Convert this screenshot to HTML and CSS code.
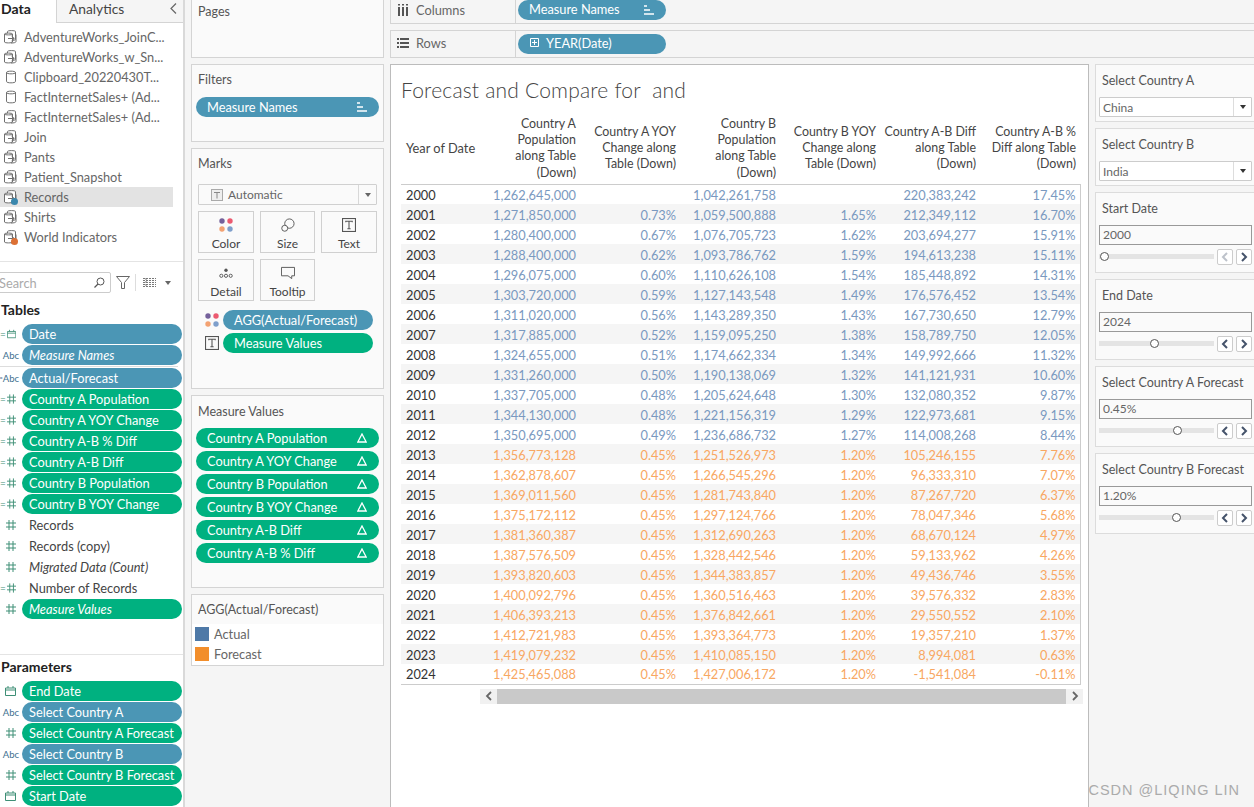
FILE: index.html
```html
<!DOCTYPE html>
<html lang="en">
<head>
<meta charset="utf-8">
<title>Forecast and Compare</title>
<link rel="stylesheet" href="styles.css">
</head>
<body>
<svg class="defs" width="0" height="0" aria-hidden="true">
  <symbol id="ds" viewBox="0 0 16 16"><g fill="#fff" stroke="#707070" stroke-width="1"><path d="M4.500 2.500c0-1.200 8-1.200 8 0v8c0 1.200-8 1.200-8 0z"/><path d="M1.500 5c0-1.200 8-1.200 8 0v8c0 1.200-8 1.200-8 0z"/><path d="M1.500 5c0 1.200 8 1.200 8 0" fill="none"/></g><path d="M5 9.500h6M8.500 7l2.800 2.500L8.500 12" fill="none" stroke="#707070"/><path d="M13 5.500v7c0 1-2 1.500-5 1.500" fill="none" stroke="#707070"/></symbol>
  <symbol id="cyl" viewBox="0 0 16 16"><g fill="none" stroke="#707070"><path d="M3.500 3.500c0-1.800 9-1.800 9 0v9c0 1.800-9 1.800-9 0z"/><path d="M3.500 3.500c0 1.800 9 1.800 9 0"/></g></symbol>
  <symbol id="hash" viewBox="0 0 10 10"><path d="M3 0v10M7 0v10M0 3h10M0 7h10" stroke="#3e8f76" stroke-width="1" fill="none"/></symbol>
  <symbol id="cal" viewBox="0 0 11 10"><path d="M.5 2h10v7.500H.5zM.5 4h10M3 0v2M8 0v2" stroke="#3e8f76" fill="none"/></symbol>
  <symbol id="tbox" viewBox="0 0 13 13"><rect x=".5" y=".5" width="12" height="12" fill="none" stroke="#555"/><path d="M3.500 4V3h6v1M6.500 3v7M5 10h3" fill="none" stroke="#555"/></symbol>
  <symbol id="dots" viewBox="0 0 14 14"><circle cx="3" cy="3" r="2.700" fill="#75619b"/><circle cx="11" cy="3" r="2.700" fill="#ec5a70"/><circle cx="3" cy="11" r="2.700" fill="#f3a272"/><circle cx="11" cy="11" r="2.700" fill="#7e9fcb"/></symbol>
  <symbol id="sort" viewBox="0 0 10 10"><path d="M0 1h3M0 5h6M0 9h10" stroke="#fff" stroke-width="1.500" fill="none"/></symbol>
  <symbol id="delta" viewBox="0 0 10 10"><path d="M5 1L9.200 9H.8z" fill="none" stroke="#fff" stroke-width="1.300"/></symbol>
  <symbol id="prev" viewBox="0 0 8 10"><path d="M6 1L2 5l4 4" fill="none" stroke="#45536b" stroke-width="2"/></symbol>
  <symbol id="next" viewBox="0 0 8 10"><path d="M2 1l4 4-4 4" fill="none" stroke="#45536b" stroke-width="2"/></symbol>
  <symbol id="prev-g" viewBox="0 0 8 10"><path d="M6 1L2 5l4 4" fill="none" stroke="#666" stroke-width="1.800"/></symbol>
  <symbol id="next-g" viewBox="0 0 8 10"><path d="M2 1l4 4-4 4" fill="none" stroke="#666" stroke-width="1.800"/></symbol>
</svg>

<div class="app">
  <aside class="data-pane">
    <div class="tabs">
      <div class="tab tab-active">Data</div>
      <div class="tab tab-other">Analytics<svg class="collapse" viewBox="0 0 7 11"><path d="M6 .5L1 5.500l5 5" fill="none" stroke="#666" stroke-width="1.200"/></svg></div>
    </div>
    <ul class="sources">
      <li class="source"><svg class="source-icon"><use href="#ds"/></svg>AdventureWorks_JoinC...</li>
      <li class="source"><svg class="source-icon"><use href="#ds"/></svg>AdventureWorks_w_Sn...</li>
      <li class="source"><svg class="source-icon"><use href="#cyl"/></svg>Clipboard_20220430T...</li>
      <li class="source"><svg class="source-icon"><use href="#cyl"/></svg>FactInternetSales+ (Ad...</li>
      <li class="source"><svg class="source-icon"><use href="#ds"/></svg>FactInternetSales+ (Ad...</li>
      <li class="source"><svg class="source-icon"><use href="#ds"/></svg>Join</li>
      <li class="source"><svg class="source-icon"><use href="#ds"/></svg>Pants</li>
      <li class="source"><svg class="source-icon"><use href="#ds"/></svg>Patient_Snapshot</li>
      <li class="source source-active"><svg class="source-icon"><use href="#ds"/></svg>Records<i class="badge badge-blue"></i></li>
      <li class="source"><svg class="source-icon"><use href="#ds"/></svg>Shirts</li>
      <li class="source"><svg class="source-icon"><use href="#ds"/></svg>World Indicators<i class="badge badge-orange"></i></li>
    </ul>
    <div class="search-row">
      <div class="search">
        <span class="search-text">Search</span>
        <svg class="search-icon" viewBox="0 0 12 12"><circle cx="7.500" cy="4.500" r="3.500" fill="none" stroke="#555"/><path d="M5 7L1.500 10.500" stroke="#555" stroke-width="1.300"/></svg>
      </div>
      <svg class="filter-icon" viewBox="0 0 14 13"><path d="M.5.500h13L8.500 6.500v6h-3v-6z" fill="none" stroke="#666"/></svg>
      <span class="vsep"></span>
      <svg class="list-icon" viewBox="0 0 13 9"><path d="M0 .5h13M0 2.500h13M0 4.500h13M0 6.500h13M0 8.500h13M3 0v9" stroke="#777" fill="none" stroke-dasharray="2 1"/></svg>
      <span class="caret"></span>
    </div>
    <section class="fields">
      <h3 class="fields-title">Tables</h3>
      <div class="field"><span class="ftype"><span class="eq">=</span><svg class="ico-cal"><use href="#cal"/></svg></span><span class="pill pill-blue">Date</span></div>
      <div class="field"><span class="ftype abc">Abc</span><span class="pill pill-blue em">Measure Names</span></div>
      <div class="field-sep"></div>
      <div class="field"><span class="ftype abc"><span class="eq">=</span>Abc</span><span class="pill pill-blue">Actual/Forecast</span></div>
      <div class="field"><span class="ftype"><span class="eq">=</span><svg class="ico-hash"><use href="#hash"/></svg></span><span class="pill pill-green">Country A Population</span></div>
      <div class="field"><span class="ftype"><span class="eq">=</span><svg class="ico-hash"><use href="#hash"/></svg></span><span class="pill pill-green">Country A YOY Change</span></div>
      <div class="field"><span class="ftype"><span class="eq">=</span><svg class="ico-hash"><use href="#hash"/></svg></span><span class="pill pill-green">Country A-B % Diff</span></div>
      <div class="field"><span class="ftype"><span class="eq">=</span><svg class="ico-hash"><use href="#hash"/></svg></span><span class="pill pill-green">Country A-B Diff</span></div>
      <div class="field"><span class="ftype"><span class="eq">=</span><svg class="ico-hash"><use href="#hash"/></svg></span><span class="pill pill-green">Country B Population</span></div>
      <div class="field"><span class="ftype"><span class="eq">=</span><svg class="ico-hash"><use href="#hash"/></svg></span><span class="pill pill-green">Country B YOY Change</span></div>
      <div class="field"><span class="ftype"><svg class="ico-hash"><use href="#hash"/></svg></span><span class="plain">Records</span></div>
      <div class="field"><span class="ftype"><svg class="ico-hash"><use href="#hash"/></svg></span><span class="plain">Records (copy)</span></div>
      <div class="field"><span class="ftype"><svg class="ico-hash"><use href="#hash"/></svg></span><span class="plain em">Migrated Data (Count)</span></div>
      <div class="field"><span class="ftype"><span class="eq">=</span><svg class="ico-hash"><use href="#hash"/></svg></span><span class="plain">Number of Records</span></div>
      <div class="field"><span class="ftype"><svg class="ico-hash"><use href="#hash"/></svg></span><span class="pill pill-green em">Measure Values</span></div>
    </section>
    <section class="params">
      <h3 class="fields-title">Parameters</h3>
      <div class="field"><span class="ftype"><svg class="ico-cal"><use href="#cal"/></svg></span><span class="pill pill-green">End Date</span></div>
      <div class="field"><span class="ftype abc">Abc</span><span class="pill pill-blue">Select Country A</span></div>
      <div class="field"><span class="ftype"><svg class="ico-hash"><use href="#hash"/></svg></span><span class="pill pill-green">Select Country A Forecast</span></div>
      <div class="field"><span class="ftype abc">Abc</span><span class="pill pill-blue">Select Country B</span></div>
      <div class="field"><span class="ftype"><svg class="ico-hash"><use href="#hash"/></svg></span><span class="pill pill-green">Select Country B Forecast</span></div>
      <div class="field"><span class="ftype"><svg class="ico-cal"><use href="#cal"/></svg></span><span class="pill pill-green">Start Date</span></div>
    </section>
  </aside>

  <div class="cards">
    <section class="card card-pages"><h4 class="card-title">Pages</h4></section>
    <section class="card card-filters">
      <h4 class="card-title">Filters</h4>
      <div class="pill pill-blue pill-wide">Measure Names<svg class="pill-sort"><use href="#sort"/></svg></div>
    </section>
    <section class="card card-marks">
      <h4 class="card-title">Marks</h4>
      <div class="mark-select">
        <svg class="mark-t" viewBox="0 0 12 12"><rect x=".5" y=".5" width="11" height="11" fill="#eee" stroke="#aaa"/><path d="M3 3.500h6M6 3.500v6" stroke="#888" fill="none"/></svg>
        <span class="mark-label">Automatic</span>
        <span class="mark-arrow"><span class="caret"></span></span>
      </div>
      <div class="mark-grid">
        <div class="mark-btn"><svg class="mark-ico"><use href="#dots"/></svg>Color</div>
        <div class="mark-btn"><svg class="mark-ico" viewBox="0 0 15 15"><circle cx="9" cy="6" r="5" fill="none" stroke="#555"/><circle cx="4" cy="11" r="3.200" fill="#fafafa" stroke="#555"/></svg>Size</div>
        <div class="mark-btn"><svg class="mark-ico"><use href="#tbox"/></svg>Text</div>
        <div class="mark-btn"><svg class="mark-ico" viewBox="0 0 15 15"><circle cx="7.500" cy="4.500" r="1.800" fill="#555"/><circle cx="2.500" cy="10.500" r="1.700" fill="none" stroke="#555"/><circle cx="7.500" cy="10.500" r="1.700" fill="none" stroke="#555"/><circle cx="12.500" cy="10.500" r="1.700" fill="none" stroke="#555"/></svg>Detail</div>
        <div class="mark-btn"><svg class="mark-ico" viewBox="0 0 15 15"><path d="M.5 1.500h14v9h-3v3l-4-3H.5z" fill="none" stroke="#555"/></svg>Tooltip</div>
      </div>
      <div class="mark-field"><svg class="mf-ico"><use href="#dots"/></svg><span class="pill pill-blue mf-pill">AGG(Actual/Forecast)</span></div>
      <div class="mark-field"><svg class="mf-ico"><use href="#tbox"/></svg><span class="pill pill-green mf-pill">Measure Values</span></div>
    </section>
    <section class="card card-values">
      <h4 class="card-title">Measure Values</h4>
      <div class="value-list">
        <div class="pill pill-green pill-wide">Country A Population<svg class="pill-delta"><use href="#delta"/></svg></div>
        <div class="pill pill-green pill-wide">Country A YOY Change<svg class="pill-delta"><use href="#delta"/></svg></div>
        <div class="pill pill-green pill-wide">Country B Population<svg class="pill-delta"><use href="#delta"/></svg></div>
        <div class="pill pill-green pill-wide">Country B YOY Change<svg class="pill-delta"><use href="#delta"/></svg></div>
        <div class="pill pill-green pill-wide">Country A-B Diff<svg class="pill-delta"><use href="#delta"/></svg></div>
        <div class="pill pill-green pill-wide">Country A-B % Diff<svg class="pill-delta"><use href="#delta"/></svg></div>
      </div>
    </section>
    <section class="card card-legend">
      <h4 class="card-title">AGG(Actual/Forecast)</h4>
      <div class="legend-body">
        <div class="legend-row"><span class="swatch swatch-actual"></span>Actual</div>
        <div class="legend-row"><span class="swatch swatch-forecast"></span>Forecast</div>
      </div>
    </section>
  </div>

  <main class="workspace">
    <div class="shelf shelf-columns">
      <div class="shelf-label"><svg class="shelf-ico" viewBox="0 0 11 12"><path d="M1.500 3v9M5.500 3v9M9.500 3v9" stroke="#555" stroke-width="2" fill="none"/><path d="M1.500 0v1.500M5.500 0v1.500M9.500 0v1.500" stroke="#555" stroke-width="2" fill="none"/></svg>Columns</div>
      <div class="pill pill-blue shelf-pill">Measure Names<svg class="pill-sort"><use href="#sort"/></svg></div>
    </div>
    <div class="shelf shelf-rows">
      <div class="shelf-label"><svg class="shelf-ico" viewBox="0 0 12 10"><path d="M3 1h9M3 5h9M3 9h9M0 1h2M0 5h2M0 9h2" stroke="#555" stroke-width="1.800" fill="none"/></svg>Rows</div>
      <div class="pill pill-blue shelf-pill"><svg class="plus" viewBox="0 0 9 9"><path d="M.5.500h8v8h-8zM4.500 2v5M2 4.500h5" fill="none" stroke="#fff"/></svg>YEAR(Date)</div>
    </div>
    <div class="canvas">
      <section class="view">
        <h1 class="view-title">Forecast and Compare for&nbsp; and</h1>
        <table class="crosstab">
          <thead>
            <tr>
              <th class="year">Year of Date</th>
              <th>Country A<br>Population<br>along Table<br>(Down)</th>
              <th>Country A YOY<br>Change along<br>Table (Down)</th>
              <th>Country B<br>Population<br>along Table<br>(Down)</th>
              <th>Country B YOY<br>Change along<br>Table (Down)</th>
              <th>Country A-B Diff<br>along Table<br>(Down)</th>
              <th>Country A-B %<br>Diff along Table<br>(Down)</th>
            </tr>
          </thead>
          <tbody>
            <tr class="actual"><td>2000</td><td>1,262,645,000</td><td></td><td>1,042,261,758</td><td></td><td>220,383,242</td><td>17.45%</td></tr>
            <tr class="actual"><td>2001</td><td>1,271,850,000</td><td>0.73%</td><td>1,059,500,888</td><td>1.65%</td><td>212,349,112</td><td>16.70%</td></tr>
            <tr class="actual"><td>2002</td><td>1,280,400,000</td><td>0.67%</td><td>1,076,705,723</td><td>1.62%</td><td>203,694,277</td><td>15.91%</td></tr>
            <tr class="actual"><td>2003</td><td>1,288,400,000</td><td>0.62%</td><td>1,093,786,762</td><td>1.59%</td><td>194,613,238</td><td>15.11%</td></tr>
            <tr class="actual"><td>2004</td><td>1,296,075,000</td><td>0.60%</td><td>1,110,626,108</td><td>1.54%</td><td>185,448,892</td><td>14.31%</td></tr>
            <tr class="actual"><td>2005</td><td>1,303,720,000</td><td>0.59%</td><td>1,127,143,548</td><td>1.49%</td><td>176,576,452</td><td>13.54%</td></tr>
            <tr class="actual"><td>2006</td><td>1,311,020,000</td><td>0.56%</td><td>1,143,289,350</td><td>1.43%</td><td>167,730,650</td><td>12.79%</td></tr>
            <tr class="actual"><td>2007</td><td>1,317,885,000</td><td>0.52%</td><td>1,159,095,250</td><td>1.38%</td><td>158,789,750</td><td>12.05%</td></tr>
            <tr class="actual"><td>2008</td><td>1,324,655,000</td><td>0.51%</td><td>1,174,662,334</td><td>1.34%</td><td>149,992,666</td><td>11.32%</td></tr>
            <tr class="actual"><td>2009</td><td>1,331,260,000</td><td>0.50%</td><td>1,190,138,069</td><td>1.32%</td><td>141,121,931</td><td>10.60%</td></tr>
            <tr class="actual"><td>2010</td><td>1,337,705,000</td><td>0.48%</td><td>1,205,624,648</td><td>1.30%</td><td>132,080,352</td><td>9.87%</td></tr>
            <tr class="actual"><td>2011</td><td>1,344,130,000</td><td>0.48%</td><td>1,221,156,319</td><td>1.29%</td><td>122,973,681</td><td>9.15%</td></tr>
            <tr class="actual"><td>2012</td><td>1,350,695,000</td><td>0.49%</td><td>1,236,686,732</td><td>1.27%</td><td>114,008,268</td><td>8.44%</td></tr>
            <tr class="forecast"><td>2013</td><td>1,356,773,128</td><td>0.45%</td><td>1,251,526,973</td><td>1.20%</td><td>105,246,155</td><td>7.76%</td></tr>
            <tr class="forecast"><td>2014</td><td>1,362,878,607</td><td>0.45%</td><td>1,266,545,296</td><td>1.20%</td><td>96,333,310</td><td>7.07%</td></tr>
            <tr class="forecast"><td>2015</td><td>1,369,011,560</td><td>0.45%</td><td>1,281,743,840</td><td>1.20%</td><td>87,267,720</td><td>6.37%</td></tr>
            <tr class="forecast"><td>2016</td><td>1,375,172,112</td><td>0.45%</td><td>1,297,124,766</td><td>1.20%</td><td>78,047,346</td><td>5.68%</td></tr>
            <tr class="forecast"><td>2017</td><td>1,381,360,387</td><td>0.45%</td><td>1,312,690,263</td><td>1.20%</td><td>68,670,124</td><td>4.97%</td></tr>
            <tr class="forecast"><td>2018</td><td>1,387,576,509</td><td>0.45%</td><td>1,328,442,546</td><td>1.20%</td><td>59,133,962</td><td>4.26%</td></tr>
            <tr class="forecast"><td>2019</td><td>1,393,820,603</td><td>0.45%</td><td>1,344,383,857</td><td>1.20%</td><td>49,436,746</td><td>3.55%</td></tr>
            <tr class="forecast"><td>2020</td><td>1,400,092,796</td><td>0.45%</td><td>1,360,516,463</td><td>1.20%</td><td>39,576,332</td><td>2.83%</td></tr>
            <tr class="forecast"><td>2021</td><td>1,406,393,213</td><td>0.45%</td><td>1,376,842,661</td><td>1.20%</td><td>29,550,552</td><td>2.10%</td></tr>
            <tr class="forecast"><td>2022</td><td>1,412,721,983</td><td>0.45%</td><td>1,393,364,773</td><td>1.20%</td><td>19,357,210</td><td>1.37%</td></tr>
            <tr class="forecast"><td>2023</td><td>1,419,079,232</td><td>0.45%</td><td>1,410,085,150</td><td>1.20%</td><td>8,994,081</td><td>0.63%</td></tr>
            <tr class="forecast"><td>2024</td><td>1,425,465,088</td><td>0.45%</td><td>1,427,006,172</td><td>1.20%</td><td>-1,541,084</td><td>-0.11%</td></tr>
          </tbody>
        </table>
        <div class="hscroll">
          <span class="hs-btn"><svg class="hs-ico"><use href="#prev-g"/></svg></span>
          <span class="hs-thumb"></span>
          <span class="hs-btn"><svg class="hs-ico"><use href="#next-g"/></svg></span>
        </div>
      </section>
      <aside class="controls">
        <section class="ctl ctl-select">
          <h4 class="ctl-title">Select Country A</h4>
          <div class="dropdown"><span class="dd-value">China</span><span class="dd-arrow"><span class="caret caret-dark"></span></span></div>
        </section>
        <section class="ctl ctl-select">
          <h4 class="ctl-title">Select Country B</h4>
          <div class="dropdown"><span class="dd-value">India</span><span class="dd-arrow"><span class="caret caret-dark"></span></span></div>
        </section>
        <section class="ctl ctl-range">
          <h4 class="ctl-title">Start Date</h4>
          <div class="range-input">2000</div>
          <div class="range-row">
            <div class="track"><span class="thumb" style="left:1px"></span></div>
            <span class="step step-off"><svg class="step-ico"><use href="#prev"/></svg></span>
            <span class="step"><svg class="step-ico"><use href="#next"/></svg></span>
          </div>
        </section>
        <section class="ctl ctl-range">
          <h4 class="ctl-title">End Date</h4>
          <div class="range-input">2024</div>
          <div class="range-row">
            <div class="track"><span class="thumb" style="left:51px"></span></div>
            <span class="step"><svg class="step-ico"><use href="#prev"/></svg></span>
            <span class="step"><svg class="step-ico"><use href="#next"/></svg></span>
          </div>
        </section>
        <section class="ctl ctl-range">
          <h4 class="ctl-title">Select Country A Forecast</h4>
          <div class="range-input">0.45%</div>
          <div class="range-row">
            <div class="track"><span class="thumb" style="left:74px"></span></div>
            <span class="step"><svg class="step-ico"><use href="#prev"/></svg></span>
            <span class="step"><svg class="step-ico"><use href="#next"/></svg></span>
          </div>
        </section>
        <section class="ctl ctl-range">
          <h4 class="ctl-title">Select Country B Forecast</h4>
          <div class="range-input">1.20%</div>
          <div class="range-row">
            <div class="track"><span class="thumb" style="left:73px"></span></div>
            <span class="step"><svg class="step-ico"><use href="#prev"/></svg></span>
            <span class="step"><svg class="step-ico"><use href="#next"/></svg></span>
          </div>
        </section>
      </aside>
    </div>
  </main>
</div>
<div class="watermark">CSDN @LIQING LIN</div>
</body>
</html>
```
FILE: styles.css
```css
* { box-sizing: border-box; }
html, body { margin: 0; height: 807px; overflow: hidden; }
body {
  background: #f5f5f5;
  font-family: "Lato", "Open Sans", sans-serif;
  font-size: 13px;
  color: #555;
  position: relative;
}
h1, h3, h4, ul { margin: 0; padding: 0; font-weight: normal; list-style: none; }
.defs { position: absolute; }
.app { display: flex; height: 807px; }

/* data pane */
.data-pane { width: 185px; flex: none; background: #fff; border-right: 2px solid #d9d9d9; height: 807px; overflow: hidden; }
.tabs { display: flex; height: 23px; }
.tab { line-height: 18px; font-size: 14px; }
.tab-active { width: 56px; padding-left: 1px; color: #222; font-weight: 700; }
.tab-other { flex: 1; background: #f5f5f5; border: 1px solid #d4d4d4; border-width: 0 0 1px 1px; padding-left: 12px; color: #444; position: relative; font-size: 13.800px; }
.collapse { position: absolute; right: 6px; top: 3px; width: 7px; height: 11px; }
.sources { height: 239px; padding-top: 4px; border-bottom: 1px solid #e4e4e4; }
.source { display: flex; align-items: center; height: 20px; width: 173px; padding: 0 0 1px 3px; color: #666; font-size: 12.800px; position: relative; white-space: nowrap; }
.source-active { background: #e3e3e3; }
.source-icon { width: 16px; height: 16px; margin-right: 5px; flex: none; }
.badge { position: absolute; left: 11px; top: 11px; width: 7px; height: 7px; border-radius: 50%; }
.badge-blue { background: #3a87ad; }
.badge-orange { background: #dc7034; }
.search-row { display: flex; align-items: center; height: 21px; margin-top: 10px; }
.search { position: relative; width: 113px; height: 21px; margin-left: -2px; border: 1px solid #ccc; border-radius: 2px; display: flex; align-items: center; padding-left: 0; }
.search-text { color: #aaa; font-size: 12.800px; }
.search-icon { position: absolute; right: 5px; top: 4px; width: 12px; height: 12px; }
.filter-icon { width: 14px; height: 13px; margin-left: 5px; }
.vsep { width: 1px; height: 17px; background: #ddd; margin: 0 7px 0 5px; }
.list-icon { width: 13px; height: 9px; }
.caret { display: inline-block; width: 0; height: 0; border: 3.500px solid transparent; border-top: 4px solid #666; border-bottom-width: 0; margin-left: 9px; }
.caret-dark { border-top-color: #333; margin-left: 0; }
.fields { height: 352px; margin-top: 10px; border-bottom: 1px solid #e4e4e4; }
.fields-title { height: 21px; line-height: 14px; font-size: 14px; font-weight: 700; color: #222; padding-left: 1px; }
.params { padding-top: 4px; }
.params .fields-title { height: 22px; line-height: 16px; }
.field { display: flex; align-items: flex-start; height: 21px; }
.field-sep { height: 2px; width: 178px; border-top: 1px solid #ddd; }
.ftype { width: 22px; flex: none; display: flex; justify-content: flex-end; align-items: center; padding-right: 3px; height: 20px; }
.eq { color: #3e8f76; font-size: 10px; line-height: 10px; margin-right: 1px; }
.abc .eq { color: #47708a; margin-right: 0; font-size: 5.500px; }
.abc { color: #3d6f8f; font-size: 9.500px; white-space: nowrap; }
.ico-hash { width: 10px; height: 10px; margin-right: 3px; }
.ico-cal { width: 11px; height: 10px; margin-right: 3px; }
.pill { display: flex; align-items: center; height: 20px; border-radius: 10px; color: #fff; font-size: 12.800px; padding: 0 0 1px 7px; white-space: nowrap; position: relative; }
.field .pill { width: 160px; }
.pill-blue { background: #4b96b5; }
.pill-green { background: #00b180; }
.em { font-style: italic; }
.plain { height: 20px; line-height: 20px; padding-left: 7px; color: #444; font-size: 12.800px; }

/* cards */
.cards { width: 193px; flex: none; margin-left: 6px; display: flex; flex-direction: column; gap: 6px; }
.card { background: #fafafa; border: 1px solid #d4d4d4; padding: 0 4px; }
.card-title { color: #555; font-size: 12.500px; line-height: 16px; padding-left: 2px; }
.card-pages { height: 58px; border-top: 0; padding-top: 4px; }
.card-filters { height: 78px; padding-top: 7px; }
.card-filters .pill { margin-top: 9px; }
.card-marks { height: 241px; padding-top: 7px; }
.card-values { height: 193px; padding-top: 8px; }
.card-legend { height: 72px; padding: 0; }
.card-legend .card-title { padding: 7px 0 0 6px; height: 29px; }
.pill-wide { padding-left: 11px; }
.pill-sort { position: absolute; right: 12px; top: 5px; width: 10px; height: 10px; }
.pill-delta { position: absolute; right: 12px; top: 5px; width: 10px; height: 10px; }
.mark-select { display: flex; align-items: center; height: 21px; margin: 12px 2px 0; border: 1px solid #d0d0d0; background: #fafafa; border-radius: 1px; }
.mark-t { width: 12px; height: 12px; margin: 0 5px 0 12px; }
.mark-label { flex: 1; color: #666; font-size: 12px; }
.mark-arrow { width: 18px; height: 19px; border-left: 1px solid #d8d8d8; display: flex; align-items: center; justify-content: center; }
.mark-arrow .caret { margin: 0; }
.mark-grid { display: grid; grid-template-columns: 56px 55px 56px; grid-auto-rows: 42px; gap: 6px; margin: 6px 2px 9px; }
.mark-btn { border: 1px solid #d0d0d0; display: flex; flex-direction: column; align-items: center; font-size: 12px; color: #444; padding-top: 6px; line-height: 15px; }
.mark-ico { width: 14px; height: 14px; margin-bottom: 4px; flex: none; }
.mark-field { display: flex; align-items: flex-start; height: 23px; }
.mf-ico { width: 14px; height: 14px; margin: 3px 4px 0 9px; flex: none; }
.mf-pill { width: 150px; padding-left: 11px; }
.value-list { display: flex; flex-direction: column; gap: 3px; margin-top: 8px; }
.legend-body { background: #fff; height: 41px; }
.legend-row { display: flex; align-items: center; height: 20px; padding-left: 3px; color: #666; font-size: 12.800px; }
.swatch { width: 14px; height: 14px; margin-right: 5px; }
.swatch-actual { background: #4e79a7; }
.swatch-forecast { background: #f28e2b; }

/* workspace */
.workspace { flex: 1; margin-left: 6px; min-width: 0; }
.shelf { display: flex; align-items: flex-start; background: #f5f5f5; border-bottom: 1px solid #d4d4d4; border-left: 1px solid #d4d4d4; }
.shelf-columns { height: 24px; }
.shelf-rows { height: 28px; margin-top: 6px; border-top: 1px solid #d4d4d4; padding-top: 3px; }
.shelf-label { width: 125px; height: 100%; border-right: 1px solid #d4d4d4; display: flex; align-items: center; color: #666; font-size: 12.800px; padding: 0 0 4px 6px; }
.shelf-rows .shelf-label { height: 27px; margin-top: -3px; padding-bottom: 3px; }
.shelf-ico { width: 12px; height: 12px; margin-right: 7px; flex: none; }
.shelf-pill { width: 148px; margin-left: 2px; padding-left: 11px; padding-bottom: 2px; }
.shelf-rows .shelf-pill { padding-left: 12px; padding-bottom: 3px; }
.plus { width: 9px; height: 9px; margin-right: 7px; }
.canvas { display: flex; margin-top: 6px; gap: 6px; align-items: flex-start; }
.view { position: relative; width: 699px; height: 760px; background: #fff; border: 1px solid #bcbcbc; padding: 0 0 0 10px; }
.view-title { font-size: 21px; font-weight: 300; color: #444; line-height: 26px; padding-top: 12px; height: 47px; letter-spacing: .2px; }
.crosstab { border-collapse: collapse; width: 679px; table-layout: fixed; font-size: 12.800px; }
.crosstab thead th { font-weight: 400; color: #444; text-align: right; font-size: 12.400px; line-height: 16.300px; height: 72px; padding: 1px 4px 0 0; vertical-align: middle; white-space: nowrap; width: 100px; }
.crosstab thead th.year { text-align: left; width: 79px; padding-left: 5px; font-size: 12.800px; }
.crosstab tbody { border: 1px solid #ccc; border-left: 0; }
.crosstab td { height: 20px; padding: 1px 4px 0 0; text-align: right; white-space: nowrap; }
.crosstab td:first-child { text-align: left; padding-left: 5px; color: #333; }
.crosstab tbody tr:nth-child(even) { background: #f5f5f5; }
.actual td { color: #7a99c0; }
.forecast td { color: #f8a762; }
.hscroll { display: flex; align-items: stretch; height: 15px; width: 603px; margin: 4px 0 0 79px; background: #f1f1f1; }
.hs-btn { width: 17px; display: flex; align-items: center; justify-content: center; }
.hs-ico { width: 8px; height: 10px; }
.hs-thumb { flex: 1; background: #c9c9c9; }
.controls { flex: 1; display: flex; flex-direction: column; gap: 6px; min-width: 0; }
.ctl { background: #fafafa; border: 1px solid #dcdcdc; border-right: 0; padding: 8px 2px 0 3px; }
.ctl-select { height: 58px; }
.ctl-range { height: 81px; }
.ctl-title { color: #555; font-size: 12.500px; line-height: 16px; padding-left: 3px; }
.dropdown { display: flex; align-items: center; height: 20px; margin-top: 8px; background: #fff; border: 1px solid #ccc; border-radius: 1px; }
.dd-value { flex: 1; padding-left: 3px; color: #666; font-size: 12px; }
.dd-arrow { width: 18px; height: 18px; border-left: 1px solid #ddd; display: flex; align-items: center; justify-content: center; }
.range-input { height: 20px; margin-top: 8px; border: 1px solid #999; padding-left: 3px; line-height: 18px; color: #666; font-size: 12px; background: #fafafa; }
.range-row { display: flex; align-items: center; height: 15px; margin-top: 4px; }
.track { position: relative; width: 115px; height: 5px; background: #e4e4e4; margin-right: 3px; }
.thumb { position: absolute; top: -2px; width: 9px; height: 9px; border-radius: 50%; background: #fff; border: 1px solid #555; }
.step { width: 16px; height: 16px; border: 1px solid #ccc; border-radius: 2px; background: #fff; margin-right: 3px; display: flex; align-items: center; justify-content: center; }
.step:last-child { margin-right: 0; }
.step-ico { width: 8px; height: 10px; }
.step-off .step-ico { opacity: .35; }
.watermark { position: absolute; right: 14px; bottom: 9px; color: #ababab; font-family: "Liberation Sans", sans-serif; font-size: 14.500px; letter-spacing: 1px; white-space: nowrap; }
```
